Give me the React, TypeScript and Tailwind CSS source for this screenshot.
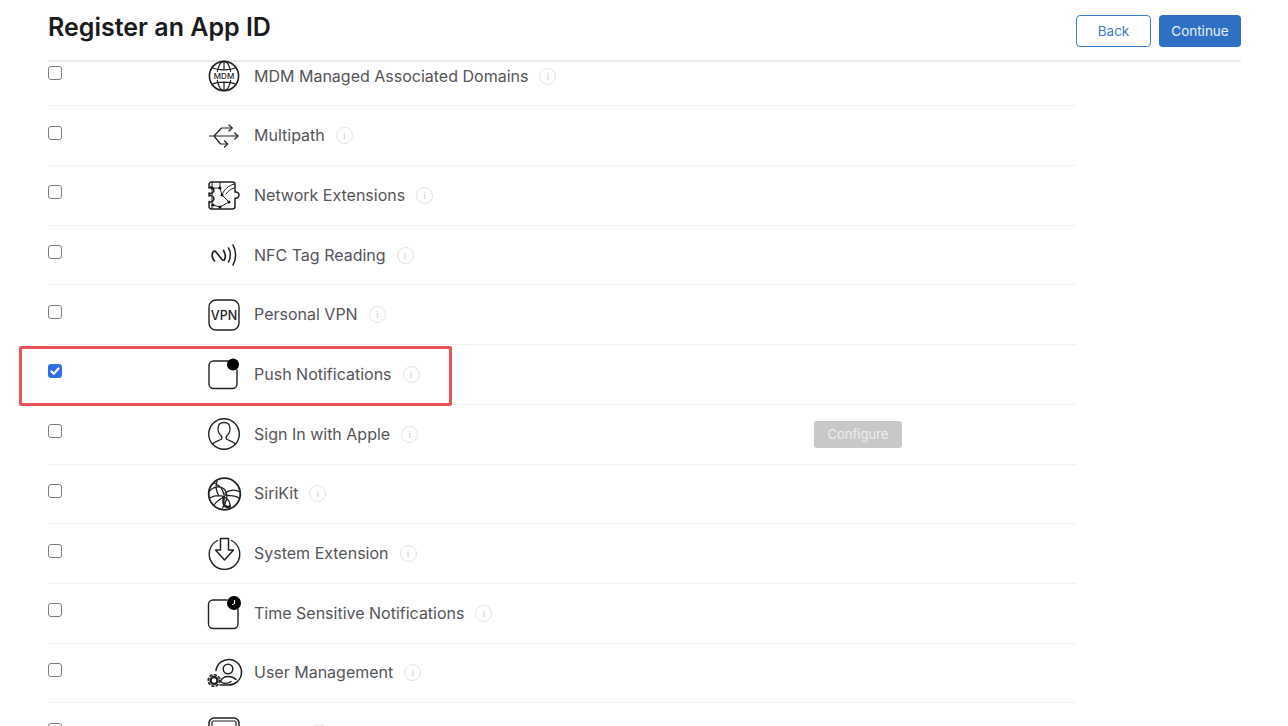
import type { ReactNode } from "react";

function Svg({ children }: { children: ReactNode }) {
  return (
    <svg viewBox="0 0 32 32" className="size-8 overflow-visible" fill="none" stroke="#222" strokeWidth="1.2" strokeLinecap="round" strokeLinejoin="round">
      {children}
    </svg>
  );
}

const icons: Record<string, ReactNode> = {
  mdm: (
    <Svg>
      <circle cx="16" cy="16" r="14.6" strokeWidth="1.6" />
      <ellipse cx="16" cy="16" rx="7" ry="14.6" />
      <path d="M16 1.400V9M16 23v7.600M4 7.500c3 1.600 7 2.300 12 2.300s9-.7 12-2.300M4 24.500c3-1.600 7-2.300 12-2.300s9 .7 12 2.300" />
      <rect x="3" y="12" width="26" height="8" fill="#fff" stroke="none" />
      <text x="16" y="19" textAnchor="middle" fontSize="8" fontWeight="500" fill="#222" stroke="none" fontFamily="Inter, sans-serif">MDM</text>
    </Svg>
  ),
  multipath: (
    <Svg>
      <path d="M1.500 16h4.500l7.500-8h10.500M6 16h24M6 16l6.500 8h7" />
      <path d="M21 5l3.200 3-3.200 3M26.800 13l3.200 3-3.200 3M16.500 21l3.200 3-3.200 3" />
    </Svg>
  ),
  network: (
    <Svg>
      <path strokeWidth="1.500" d="M3.500 3h21a2.500 2.500 0 0 1 2.500 2.500v7.500a3.200 3.200 0 1 1 0 6.200v8.300a2.500 2.500 0 0 1-2.500 2.500h-21a2.500 2.500 0 0 1-2.500-2.500v-5a3.200 3.200 0 1 0 0-5.500v-3a3.200 3.200 0 1 0 0-5.500v-3a2.500 2.500 0 0 1 2.500-2.500z" />
      <path strokeWidth="1" d="M4 3v27M1 9h11l2 7 7 7M5 26l7 2 9-5M12 3v6M27 5c-6 1-11 5-13 11M26 9c-3 1-6 3-8 6" />
      <g fill="#111" stroke="none">
        <circle cx="4" cy="9" r="1.500" />
        <circle cx="12" cy="9" r="1.500" />
        <circle cx="14" cy="16" r="1.500" />
        <circle cx="21" cy="23" r="1.500" />
        <circle cx="5" cy="26" r="1.500" />
        <circle cx="12" cy="28" r="1.500" />
      </g>
    </Svg>
  ),
  nfc: (
    <Svg>
      <path strokeWidth="1.700" d="M6.500 22c-2.500-2.500-3-6.500-1.500-9 1-1.300 2-1 3 0l6 7.500c1 1 2 1 2.500 0 1.200-2.500.8-6-1-9" />
      <path strokeWidth="1.500" d="M20.500 9c2.500 4 2.500 10 0 14M25 6c3.500 6 3.500 14 0 20" />
    </Svg>
  ),
  vpn: (
    <Svg>
      <rect x="1" y="1" width="30" height="30" rx="7" strokeWidth="1.400" />
      <text x="16" y="20.500" textAnchor="middle" fontSize="12.500" fontWeight="500" fill="#222" stroke="none" fontFamily="Inter, sans-serif">VPN</text>
    </Svg>
  ),
  push: (
    <Svg>
      <path strokeWidth="1.400" d="M20 3H5.500A4.500 4.500 0 0 0 1 7.500V26a4.500 4.500 0 0 0 4.500 4.500H24.500A4.500 4.500 0 0 0 29 26V12" />
      <circle cx="25" cy="6.500" r="6" fill="#000" stroke="none" />
    </Svg>
  ),
  apple: (
    <Svg>
      <circle cx="16" cy="16" r="15.300" strokeWidth="1.400" />
      <path strokeWidth="1.300" d="M4.500 26c2-2.500 6.500-3.500 8.500-4.500 1-.5 1-2.500.5-3.500-2-1.500-3.500-4-3.500-7.500 0-4 2.500-6 6-6s6 2 6 6c0 3.500-1.500 6-3.500 7.500-.5 1-.5 3 .5 3.500 2 1 6.500 2 8.500 4.500" />
    </Svg>
  ),
  siri: (
    <Svg>
      <circle cx="16.500" cy="16" r="15.800" strokeWidth="1.800" />
      <path strokeWidth="1.300" d="M1.500 13c6-6 13-5 16 0 3 5 1 10-3 17M6 5c5 2 9 6 10 12M1.500 20c6-3 11-3 15-1s7 7 5 11M17 15c4-3 9-4 15-1M17 17c5 1 10 0 14 3M16 19c-4 2-8 5-10 8M9 3c-2 5-1 10 2 15" />
      <path strokeWidth="2.400" d="M16 19c-1 4-1 7 1 9 2 1.500 4 1 5 0" />
    </Svg>
  ),
  system: (
    <Svg>
      <path strokeWidth="1.400" d="M9.500 2.500a15.300 15.300 0 1 0 14 0" />
      <path strokeWidth="1.500" d="M12.500 0.500h8v11.500h5L16.500 22l-9-10h5z" />
    </Svg>
  ),
  time: (
    <Svg>
      <path strokeWidth="1.400" d="M19 3H5A4.500 4.500 0 0 0 .5 7.500V27A4.500 4.500 0 0 0 5 31.500H25.500A4.500 4.500 0 0 0 30 27V12" />
      <circle cx="26" cy="6" r="7" fill="#000" stroke="none" />
      <path d="M26.500 3.500v3l-2 1" stroke="#fff" strokeWidth="1" />
    </Svg>
  ),
  user: (
    <Svg>
      <path strokeWidth="1.500" d="M8 13.500A12.800 12.800 0 1 1 20 28h-8" />
      <circle cx="20" cy="12" r="4.800" strokeWidth="1.500" />
      <path strokeWidth="1.500" d="M12.500 24.500c1-3 4-5 8-5 3 0 5.500 1 7.500 3M12.500 24.500c3 3 8 2 10.500 0" />
      <circle cx="6" cy="23.500" r="3.500" strokeWidth="2.400" />
      <circle cx="6" cy="23.500" r="5.800" strokeWidth="1.600" strokeDasharray="2 2.500" />
    </Svg>
  ),
  wallet: (
    <Svg>
      <rect x="1" y="1" width="30" height="30" rx="5" strokeWidth="1.500" />
      <rect x="4" y="4" width="24" height="6" rx="1" />
    </Svg>
  ),
};

function InfoIcon() {
  return (
    <span className="ml-[11px] flex size-[17px] shrink-0 items-center justify-center rounded-full border border-[#e2e2e2] font-['Liberation_Serif',serif] text-[11px] leading-none text-[#cfcfcf]">
      i
    </span>
  );
}

const rows = [
  { key: "mdm", label: "MDM Managed Associated Domains" },
  { key: "multipath", label: "Multipath" },
  { key: "network", label: "Network Extensions" },
  { key: "nfc", label: "NFC Tag Reading" },
  { key: "vpn", label: "Personal VPN" },
  { key: "push", label: "Push Notifications", checked: true, highlighted: true },
  { key: "apple", label: "Sign In with Apple", configure: true },
  { key: "siri", label: "SiriKit" },
  { key: "system", label: "System Extension" },
  { key: "time", label: "Time Sensitive Notifications" },
  { key: "user", label: "User Management" },
  { key: "wallet", label: "Wallet" },
];

function Checkbox({ checked }: { checked?: boolean }) {
  if (checked) {
    return (
      <span className="flex size-[14px] items-center justify-center rounded-[3px] bg-[#2f6fe8]">
        <svg viewBox="0 0 14 14" className="size-[14px]" fill="none" stroke="#fff" strokeWidth="2.200" strokeLinecap="round" strokeLinejoin="round">
          <path d="M3.500 7.500l2.300 2.300 4.700-5.300" />
        </svg>
      </span>
    );
  }
  return <span className="block size-[14px] rounded-[3px] border border-[#7c7c7c] bg-white" />;
}

export default function App() {
  return (
    <main className="flex h-[726px] flex-col overflow-hidden bg-white pl-12 pr-[47px] font-['Inter',sans-serif]">
      <header className="flex h-[62px] shrink-0 items-start justify-between border-b-2 border-[#ebebeb]">
        <h1 className="mt-[10px] text-[25px] leading-[34px] font-semibold text-[#1b1b1d]">Register an App ID</h1>
        <div className="mt-[15px] flex gap-2">
          <button className="h-8 w-[75px] rounded-[4px] border border-[#3f7fd0] bg-white text-[13.500px] text-[#3f7bc8]">Back</button>
          <button className="h-8 w-[82px] rounded-[4px] bg-[#2f6fc4] text-[13.500px] text-[#e8effa]">Continue</button>
        </div>
      </header>
      <div className="min-h-0 flex-1">
        <ul className="-mt-[15.300px] w-[1028px]">
          {rows.map((row) => (
            <li key={row.key} className="relative grid h-[59.700px] grid-cols-[160px_46px_560px_auto] items-center border-b border-[#f0f0f0]">
              <div className="-mt-[6px]">
                <Checkbox checked={row.checked} />
              </div>
              <div>{icons[row.key]}</div>
              <div className="flex items-center text-base text-[#555558]">
                <span className="-mt-px">{row.label}</span>
                <InfoIcon />
              </div>
              {row.configure && (
                <button className="h-[27px] w-[88px] rounded-[3px] bg-[#c8c8c8] pt-px text-[13px] text-[#eeeeee]">Configure</button>
              )}
              {row.highlighted && (
                <div className="absolute top-[1px] left-[-29px] h-[60px] w-[433px] rounded-[2px] border-[3px] border-[#e8525a]" />
              )}
            </li>
          ))}
        </ul>
      </div>
    </main>
  );
}
